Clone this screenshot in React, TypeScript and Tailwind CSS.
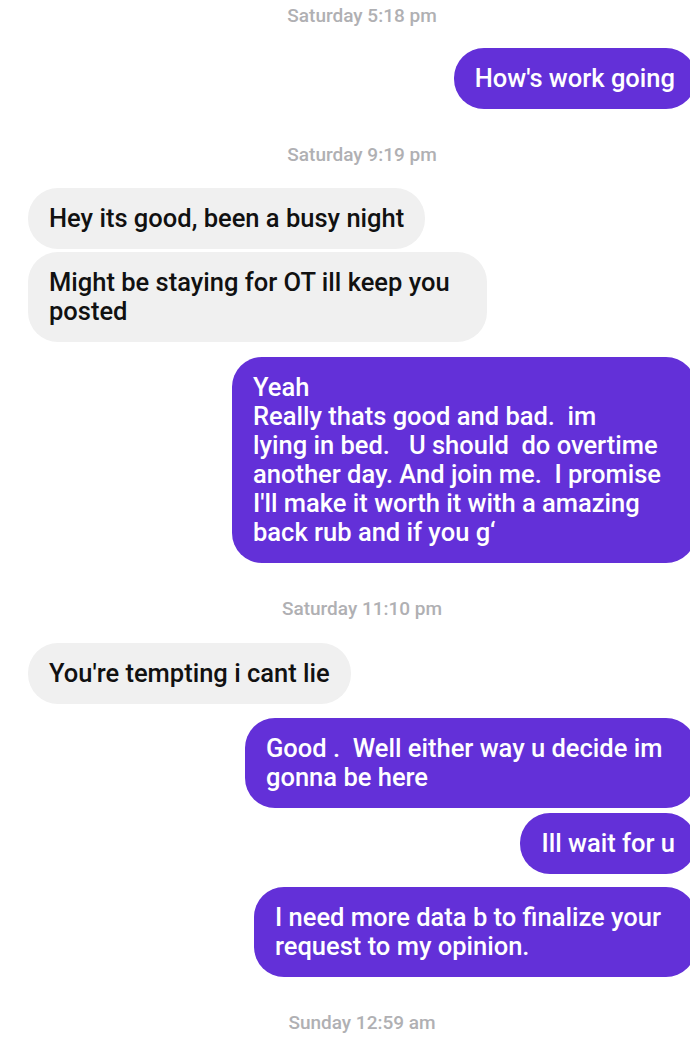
type Msg = {
  from: "me" | "them";
  text: string;
  width?: string;
  mt: string;
};

type Item = { kind: "time"; text: string; mt: string } | ({ kind: "msg" } & Msg);

const thread: Item[] = [
  { kind: "time", text: "Saturday 5:18 pm", mt: "mt-[5px]" },
  { kind: "msg", from: "me", text: "How's work going", mt: "mt-[21px]" },
  { kind: "time", text: "Saturday 9:19 pm", mt: "mt-[35px]" },
  { kind: "msg", from: "them", text: "Hey its good, been a busy night", mt: "mt-[22px]" },
  {
    kind: "msg",
    from: "them",
    text: "Might be staying for OT ill keep you\nposted",
    width: "w-[459px]",
    mt: "mt-[3px]",
  },
  {
    kind: "msg",
    from: "me",
    text: "Yeah\nReally thats good and bad.  im\nlying in bed.   U should  do overtime\nanother day. And join me.  I promise\nI'll make it worth it with a amazing\nback rub and if you g\u2018",
    width: "w-[464px]",
    mt: "mt-[15px]",
  },
  { kind: "time", text: "Saturday 11:10 pm", mt: "mt-[35px]" },
  { kind: "msg", from: "them", text: "You're tempting i cant lie", mt: "mt-[23px]" },
  {
    kind: "msg",
    from: "me",
    text: "Good .  Well either way u decide im\ngonna be here",
    width: "w-[451px]",
    mt: "mt-[14px]",
  },
  { kind: "msg", from: "me", text: "Ill wait for u", mt: "mt-[5px]" },
  {
    kind: "msg",
    from: "me",
    text: "I need more data b to finalize your\nrequest to my opinion.",
    width: "w-[442px]",
    mt: "mt-[13px]",
  },
  { kind: "time", text: "Sunday 12:59 am", mt: "mt-[35px]" },
];

function Timestamp({ text, mt }: { text: string; mt: string }) {
  return (
    <div className={`${mt} text-center text-[19px] font-medium leading-[22px] text-[#b0b0b3]`}>
      {text}
    </div>
  );
}

function Bubble({ from, text, width, mt }: Msg) {
  const mine = from === "me";
  return (
    <div className={`${mt} flex ${mine ? "justify-end pr-[28px]" : "justify-start pl-[28px]"}`}>
      <div
        className={`${width ?? "w-fit"} whitespace-pre-wrap rounded-[30px] px-[21px] py-4 text-[25.5px] font-medium leading-[29px] ${
          mine ? "bg-[#6330d8] text-white" : "bg-[#f0f0f0] text-[#111]"
        }`}
      >
        {text}
      </div>
    </div>
  );
}

export default function App() {
  return (
    <div className="h-[1044px] w-[690px] overflow-hidden bg-white font-['Roboto',sans-serif]">
      <div className="flex w-[724px] flex-col">
        {thread.map((item, i) =>
          item.kind === "time" ? (
            <Timestamp key={i} text={item.text} mt={item.mt} />
          ) : (
            <Bubble key={i} from={item.from} text={item.text} width={item.width} mt={item.mt} />
          ),
        )}
      </div>
    </div>
  );
}
